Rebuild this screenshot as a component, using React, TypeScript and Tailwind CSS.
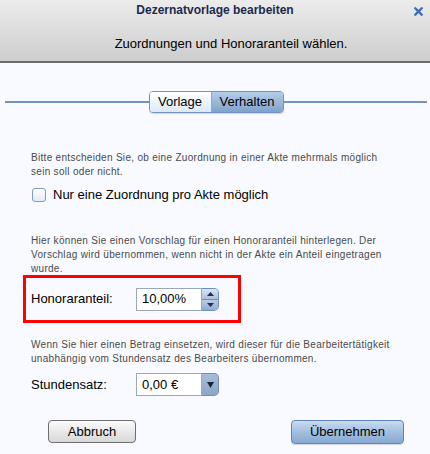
import { X } from "lucide-react"

const small = "text-[10px] leading-[14px] tracking-[0.3px] text-[#4a4a4a]"

function Spinner() {
    return (
        <div className="flex h-[23px] w-[83px]">
            <div className="flex flex-1 items-center border border-[#9aa8b8] bg-white pl-[5px] text-[13px] text-black">
                10,00%
            </div>
            <div className="flex w-[17px] flex-col overflow-hidden rounded-r-[5px] border border-l-0 border-[#6f8fba]">
                <div className="flex flex-1 items-center justify-center border-b border-[#6f8fba] bg-gradient-to-b from-[#dbe6f3] to-[#a9bfdb]">
                    <svg width="7" height="4" viewBox="0 0 7 4"><path d="M3.5 0L7 4H0z" fill="#1f2f4f" /></svg>
                </div>
                <div className="flex flex-1 items-center justify-center bg-gradient-to-b from-[#b8cce4] to-[#8faccf]">
                    <svg width="7" height="4" viewBox="0 0 7 4"><path d="M0 0h7L3.5 4z" fill="#1f2f4f" /></svg>
                </div>
            </div>
        </div>
    )
}

function Combo() {
    return (
        <div className="flex h-[23px] w-[83px]">
            <div className="flex flex-1 items-center border border-[#9aa8b8] bg-white pl-[5px] text-[13px] text-black">
                0,00 €
            </div>
            <div className="flex w-[17px] items-center justify-center rounded-r-[5px] border border-l-0 border-[#6f8fba] bg-gradient-to-b from-[#a7bcd8] to-[#8ba6c8]">
                <svg width="7" height="6" viewBox="0 0 7 6"><path d="M0 0h7L3.5 6z" fill="#1a2438" /></svg>
            </div>
        </div>
    )
}

export default function App() {
    return (
        <div className="flex h-[454px] w-[430px] flex-col bg-[#f8faff] font-['Liberation_Sans',Arial,sans-serif]">
            {/* header */}
            <div className="relative h-[63px] border-b-2 border-[#6b6b6b] bg-gradient-to-b from-[#ececec] to-[#cdcdcd]">
                <div className="pt-[3px] text-center text-[12px] font-bold leading-[15px] text-[#1c2a4e]">
                    Dezernatvorlage bearbeiten
                </div>
                <div className="mt-[18px] pl-[32px] text-center text-[13px] leading-[16px] text-black">
                    Zuordnungen und Honoraranteil wählen.
                </div>
                <X className="absolute right-[5px] top-[5px] text-[#3d6cb0]" size={13} strokeWidth={4.5} />
            </div>

            {/* tabs */}
            <div className="mt-[28px] flex items-center pl-[5px] pr-[3px]">
                <div className="h-[2px] flex-1 bg-[#7594bc]" />
                <div className="flex h-[22px] overflow-hidden rounded-[4px] border border-[#6f93c2] text-[13px] text-black shadow-[0_1px_1px_rgba(0,0,0,0.15)]">
                    <div className="flex w-[61px] items-center justify-center bg-gradient-to-b from-[#ffffff] to-[#dde9f6]">Vorlage</div>
                    <div className="flex w-[72px] items-center justify-center border-l border-[#8eaad0] bg-gradient-to-b from-[#b7cde6] to-[#7fa3cc]">Verhalten</div>
                </div>
                <div className="h-[2px] flex-1 bg-[#7594bc]" />
            </div>

            {/* content */}
            <div className="flex flex-col px-[31px]">
                <p className={`${small} mt-[38px]`}>
                    Bitte entscheiden Sie, ob eine Zuordnung in einer Akte mehrmals möglich<br />sein soll oder nicht.
                </p>
                <label className="mt-[8px] flex items-center gap-[7px] text-[13px] leading-[16px] text-black">
                    <span className="ml-[1px] h-[14px] w-[14px] rounded-[3px] border border-[#7d9bc4] bg-gradient-to-b from-[#ffffff] to-[#e3ebf5]" />
                    Nur eine Zuordnung pro Akte möglich
                </label>

                <p className={`${small} mt-[31px]`}>
                    Hier können Sie einen Vorschlag für einen Honoraranteil hinterlegen. Der<br />
                    Vorschlag wird übernommen, wenn nicht in der Akte ein Anteil eingetragen<br />
                    wurde.
                </p>
                <div className="-ml-[8px] -mt-[1px] flex h-[48px] w-[218px] items-center border-[3px] border-[#ff0000] pl-[5px]">
                    <span className="w-[105px] text-[13px] text-black">Honoraranteil:</span>
                    <Spinner />
                </div>

                <p className={`${small} mt-[15px]`}>
                    Wenn Sie hier einen Betrag einsetzen, wird dieser für die Bearbeitertätigkeit<br />
                    unabhängig vom Stundensatz des Bearbeiters übernommen.
                </p>
                <div className="mt-[7px] flex items-center">
                    <span className="w-[105px] text-[13px] text-black">Stundensatz:</span>
                    <Combo />
                </div>
            </div>

            {/* footer */}
            <div className="mt-[24px] flex justify-between pl-[48px] pr-[26px]">
                <button className="h-[23px] w-[88px] rounded-[4px] border border-[#6e6e6e] bg-gradient-to-b from-[#fbfbfb] to-[#d8d8d8] text-[13px] text-black">
                    Abbruch
                </button>
                <button className="h-[24px] w-[113px] rounded-[4px] border border-[#5f88c0] bg-gradient-to-b from-[#c9daee] via-[#a2bfe0] to-[#86a8d2] text-[13px] text-black shadow-[0_1px_1px_rgba(0,0,0,0.15)]">
                    Übernehmen
                </button>
            </div>
        </div>
    )
}
